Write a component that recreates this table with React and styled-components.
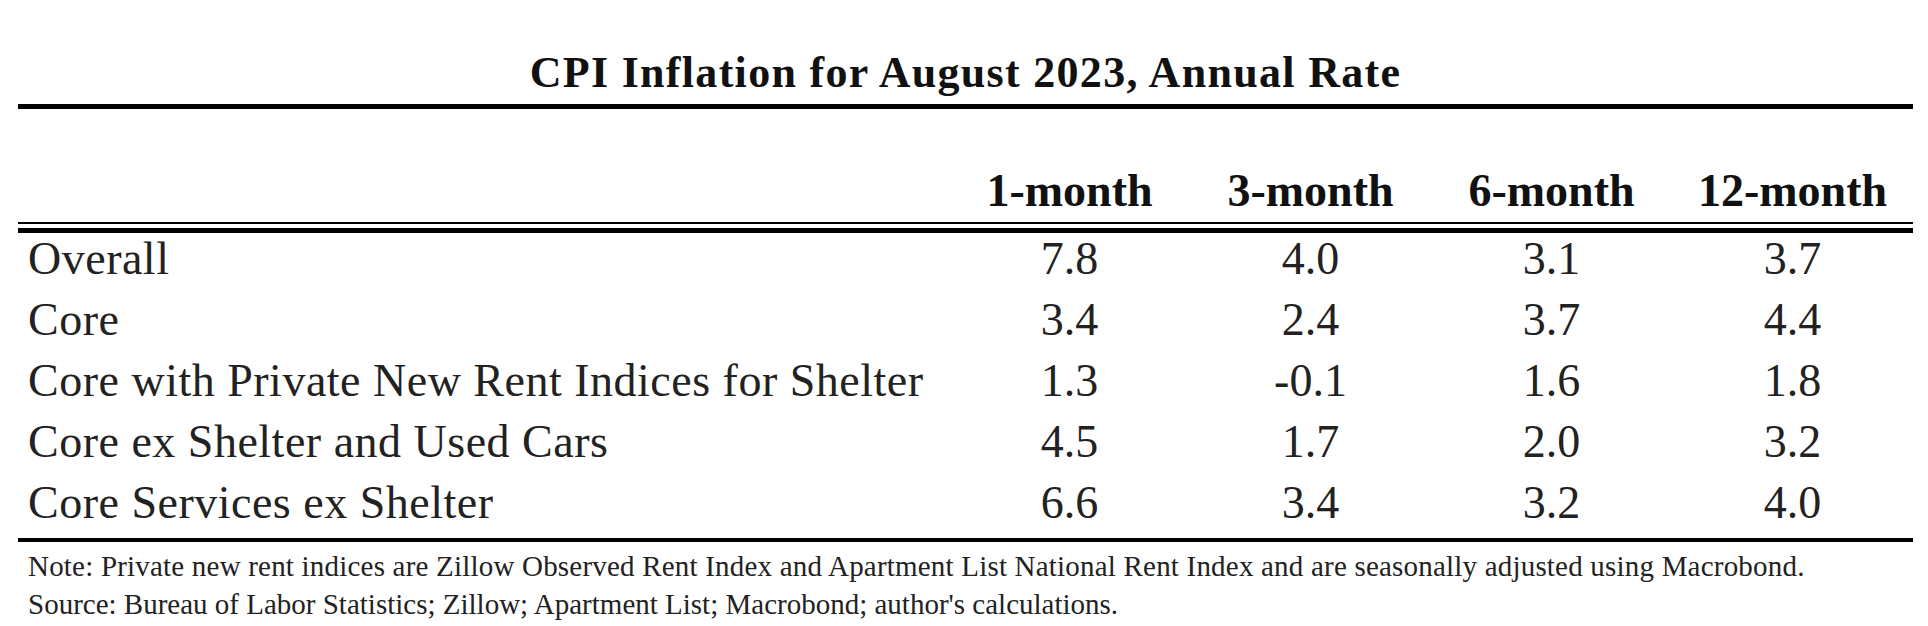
import React from "react";
import styled, { createGlobalStyle } from "styled-components";

const GlobalStyle = createGlobalStyle`
  html, body {
    margin: 0;
    padding: 0;
    background: #ffffff;
  }
  body {
    font-family: "Liberation Serif", "Times New Roman", serif;
    color: #1c1c1c;
  }
`;

const Page = styled.div`
  padding: 0 0 0 18px;
  width: 1928px;
  height: 626px;
  box-sizing: border-box;
  background: #fff;
`;

const Table = styled.div`
  width: 1895px;
`;

const Title = styled.h1`
  margin: 0;
  padding: 48px 0 6px;
  font-size: 44px;
  line-height: 50px;
  font-weight: 700;
  letter-spacing: 1.3px;
  text-align: center;
  color: #111;
  border-bottom: 5px solid #000;
`;

const Row = styled.div`
  display: grid;
  grid-template-columns: 931px repeat(4, 241px);
  align-items: baseline;
`;

const HeadRow = styled(Row)`
  padding: 54px 0 3px;
  font-size: 46px;
  line-height: 56px;
  font-weight: 700;
  color: #111;
`;

const DoubleRule = styled.div`
  height: 4px;
  border-top: 2px solid #000;
  border-bottom: 5px solid #000;
`;

const BodyRow = styled(Row)`
  padding-bottom: 10px;
  font-size: 46px;
  line-height: 51px;
  color: #222;
`;

const Label = styled.div`
  padding-left: 10px;
  letter-spacing: 0.5px;
  white-space: nowrap;
`;

const Cell = styled.div`
  text-align: center;
  white-space: nowrap;
`;

const Footer = styled.div`
  border-top: 4px solid #000;
  padding: 5px 0 0 10px;
  font-size: 29px;
  line-height: 38px;
  color: #222;
`;

const FootLine = styled.div`
  white-space: nowrap;
  letter-spacing: ${(p) => p.$spacing || 0}px;
`;

const headers = ["1-month", "3-month", "6-month", "12-month"];

const rows = [
  { label: "Overall", values: ["7.8", "4.0", "3.1", "3.7"] },
  { label: "Core", values: ["3.4", "2.4", "3.7", "4.4"] },
  {
    label: "Core with Private New Rent Indices for Shelter",
    values: ["1.3", "-0.1", "1.6", "1.8"],
  },
  { label: "Core ex Shelter and Used Cars", values: ["4.5", "1.7", "2.0", "3.2"] },
  { label: "Core Services ex Shelter", values: ["6.6", "3.4", "3.2", "4.0"] },
];

export default function App() {
  return (
    <>
      <GlobalStyle />
      <Page>
        <Table>
          <Title>CPI Inflation for August 2023, Annual Rate</Title>
          <HeadRow>
            <div />
            {headers.map((h) => (
              <Cell key={h}>{h}</Cell>
            ))}
          </HeadRow>
          <DoubleRule />
          {rows.map((r) => (
            <BodyRow key={r.label}>
              <Label>{r.label}</Label>
              {r.values.map((v, i) => (
                <Cell key={i}>{v}</Cell>
              ))}
            </BodyRow>
          ))}
          <Footer>
            <FootLine $spacing={0.2}>
              Note: Private new rent indices are Zillow Observed Rent Index and
              Apartment List National Rent Index and are seasonally adjusted
              using Macrobond.
            </FootLine>
            <FootLine>
              Source: Bureau of Labor Statistics; Zillow; Apartment List;
              Macrobond; author's calculations.
            </FootLine>
          </Footer>
        </Table>
      </Page>
    </>
  );
}
